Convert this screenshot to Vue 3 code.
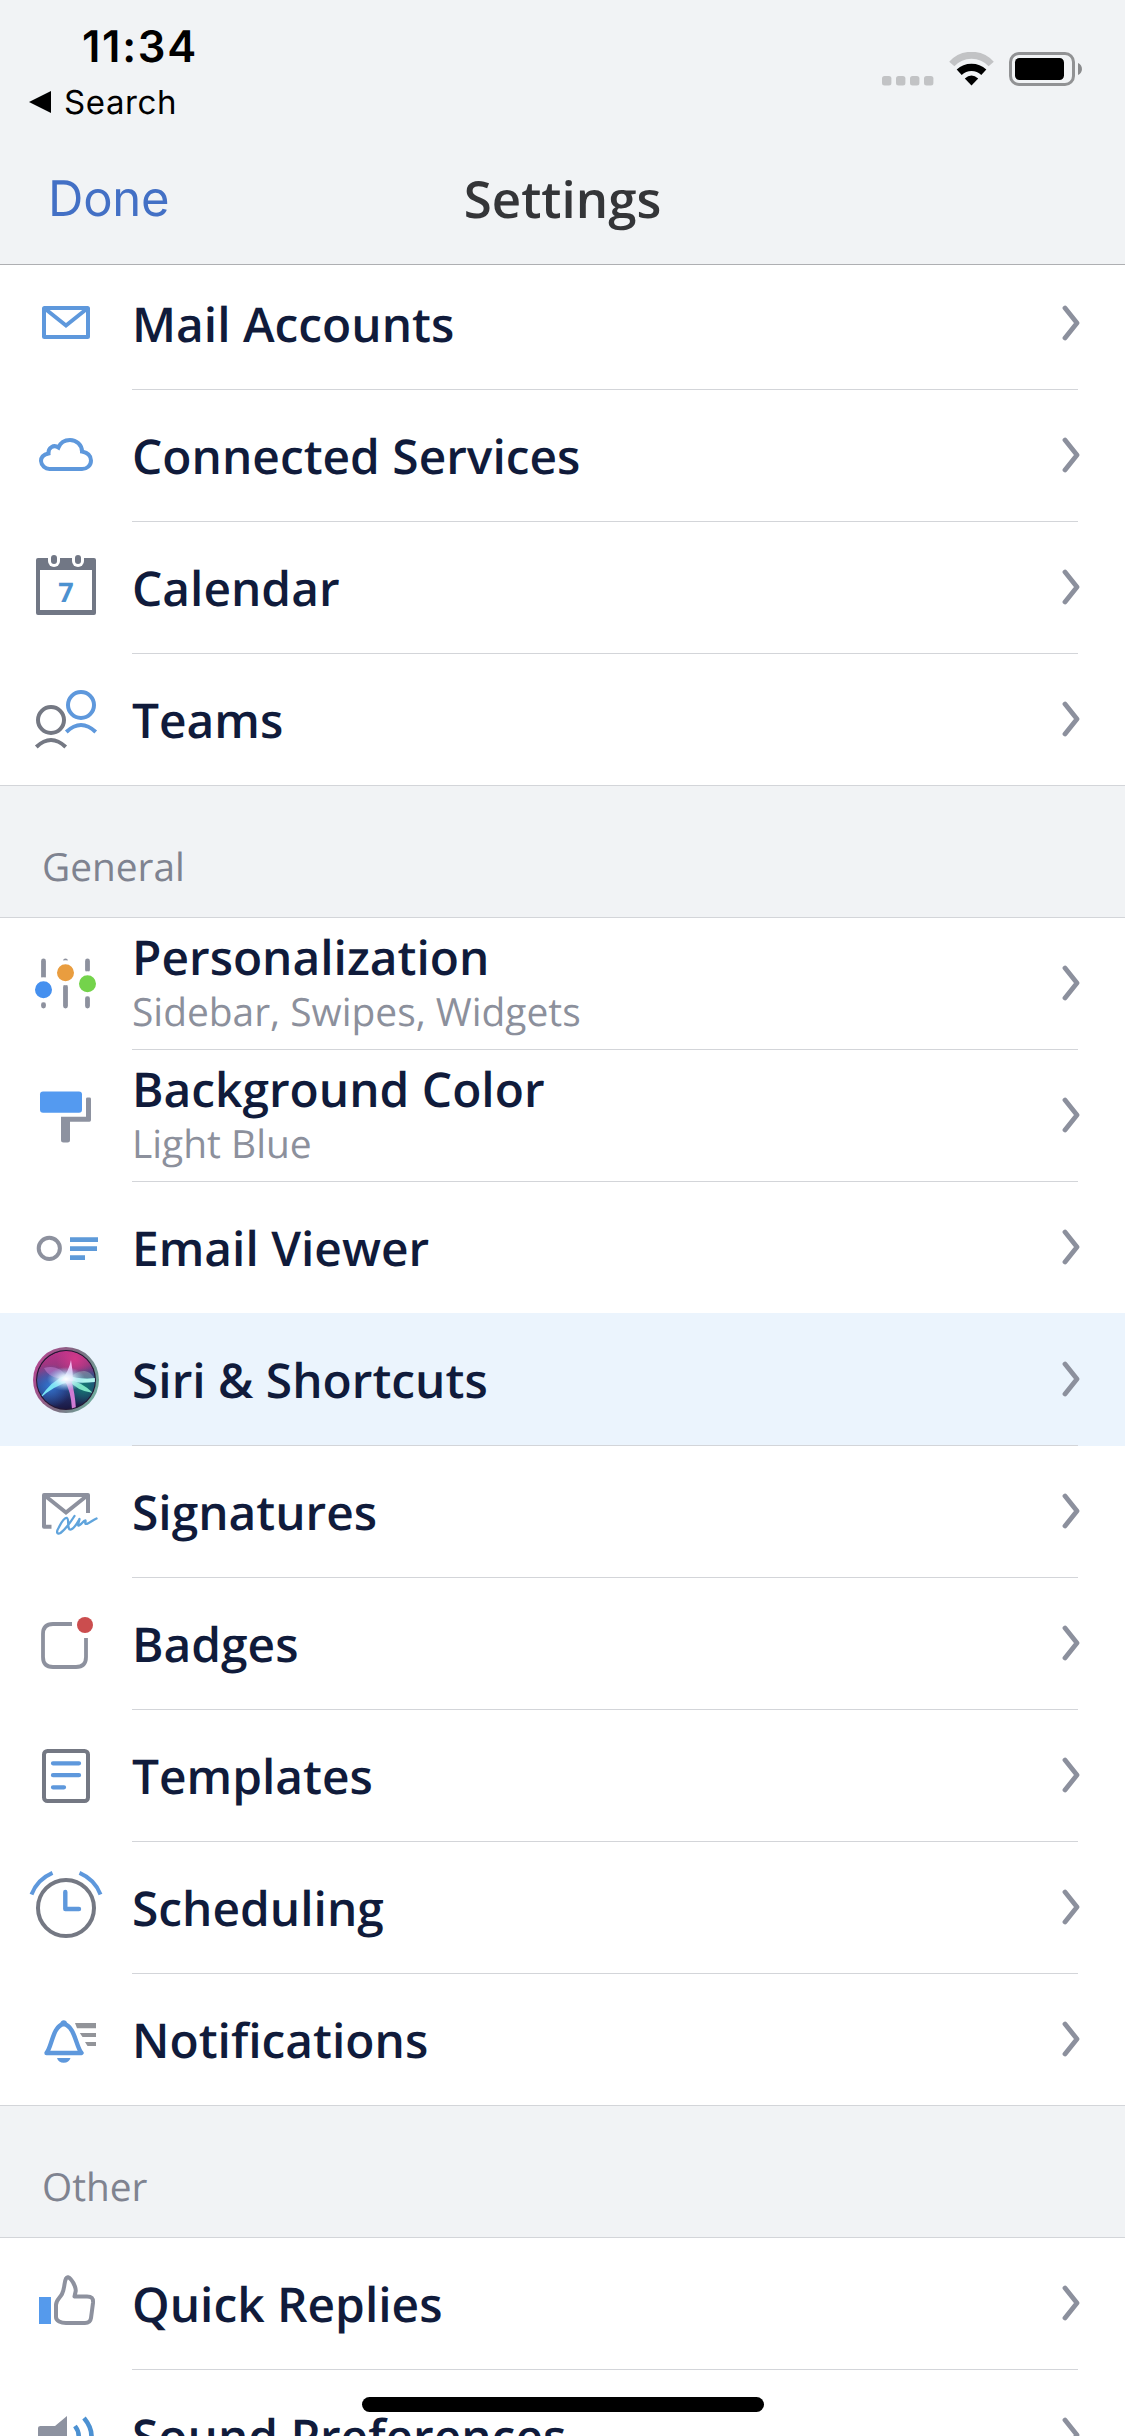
<template>
  <div class="phone">
    <header class="header">
      <div class="status">
        <div class="status__left">
          <div class="status__time">11:34</div>
          <div class="status__back">
            <svg width="22" height="22" viewBox="0 0 22 22"><path d="M0 11L22 0V22Z" fill="#000" /></svg>
            <span>Search</span>
          </div>
        </div>
        <div class="status__right">
          <svg width="52" height="34" viewBox="0 0 52 34" fill="#c2c3c5">
            <rect v-for="n in 4" :key="n" :x="(n - 1) * 14" y="24" width="9.4" height="9.4" rx="2.5" />
          </svg>
          <svg class="status__wifi" width="45" height="34" viewBox="0 0 45 34" fill="none">
            <path d="M2.8 12A26.6 26.6 0 0 1 42.2 12" stroke="#c2c3c5" stroke-width="7" />
            <path d="M10.2 20.2A18 18 0 0 1 34.8 20.2" stroke="#000" stroke-width="7.4" />
            <path d="M15.8 26.6Q22.5 20.6 29.2 26.6L22.5 33.4Z" fill="#000" />
          </svg>
          <svg class="status__battery" width="74" height="34" viewBox="0 0 74 34">
            <rect x="1.5" y="1.5" width="63" height="31" rx="8.5" fill="none" stroke="#919294" stroke-width="3" />
            <rect x="6" y="6" width="49" height="22" rx="4.5" fill="#000" />
            <path d="M69 11C74.3 13 74.3 21 69 23Z" fill="#8a8b8d" />
          </svg>
        </div>
      </div>
      <nav class="nav">
        <a class="nav__done">Done</a>
        <h1 class="nav__title">Settings</h1>
        <span></span>
      </nav>
    </header>

    <main class="content">
      <section v-for="group in groups" :key="group.name" class="group">
        <h2 v-if="group.label" class="group__label">{{ group.label }}</h2>
        <div
          v-for="item in group.items"
          :key="item.title"
          class="row"
          :class="{ 'row--active': item.active, 'row--double': item.subtitle }"
        >
          <svg class="row__icon" width="132" height="132" viewBox="0 0 132 132" fill="none" stroke-width="4">
            <g v-if="item.icon === 'mail'" class="blue" stroke-linejoin="round">
              <rect x="44" y="50" width="44" height="29" rx="0.5" />
              <path d="M46 51.5L66 67.5L86 51.5" stroke-linejoin="miter" />
            </g>
            <g v-else-if="item.icon === 'cloud'" class="blue">
              <path d="M50 79H82C87 79 91 75.5 91 70.5C91 65.5 87 62.5 82 61.5C82 55 76.5 50 70 50C65 50 60.5 52.5 58.5 57.5C53.5 54 48 58 48.5 63.5C44 64.5 41 67 41 71A8.5 8.5 0 0 0 50 79Z" />
            </g>
            <g v-else-if="item.icon === 'calendar'">
              <path d="M38 36H94Q96 36 96 38V91Q96 93 94 93H38Q36 93 36 91V38Q36 36 38 36ZM40 48V88H92V48Z" fill="#717785" fill-rule="evenodd" />
              <rect x="48" y="30" width="12" height="15" rx="6" fill="#fff" />
              <rect x="72" y="30" width="12" height="15" rx="6" fill="#fff" />
              <rect x="51" y="33" width="6" height="9" rx="3" fill="#717785" />
              <rect x="75" y="33" width="6" height="9" rx="3" fill="#717785" />
              <text class="day" x="66" y="80" text-anchor="middle">7</text>
            </g>
            <g v-else-if="item.icon === 'teams'">
              <g class="dark"><circle cx="51" cy="66" r="13" /><path d="M36.3 93Q51 79 65.7 93" /></g>
              <g class="blue"><circle cx="81" cy="51" r="13" /><path d="M66.3 78Q81 64 95.7 78" /></g>
            </g>
            <g v-else-if="item.icon === 'sliders'">
              <path class="gray" d="M43.5 43V59M43.5 86.5V88M65.5 42.8V42.9M65.5 69V88M87.5 43V52M87.5 80.5V88" stroke-width="4.8" stroke-linecap="round" />
              <g stroke="#fff">
                <circle cx="43.5" cy="71.8" r="10.5" fill="#4590ef" />
                <circle cx="65.5" cy="54.7" r="10.5" fill="#e99d3f" />
                <circle cx="87.5" cy="65.8" r="10.5" fill="#74d34b" />
              </g>
            </g>
            <g v-else-if="item.icon === 'roller'">
              <rect x="40" y="41.5" width="42" height="21.2" rx="3" fill="#549af0" />
              <path d="M86 49Q86 47.6 87.5 47.6H89.5Q91 47.6 91 49V70Q91 71.8 89.5 71.8H70V90Q70 92.5 67.5 92.5H63.5Q61 92.5 61 90V66.8H86Z" fill="#8d92a0" />
            </g>
            <g v-else-if="item.icon === 'viewer'">
              <circle class="gray" cx="49.3" cy="66.3" r="10.6" />
              <path d="M70 55.2H98V60H70ZM70 64.2H97V69H70ZM70 73.2H85V78H70Z" fill="#5e9ad9" />
            </g>
            <g v-else-if="item.icon === 'siri'">
              <defs>
                <linearGradient id="siriRim" x1="0" y1="0.3" x2="1" y2="0.7">
                  <stop offset="0" stop-color="#b54792" />
                  <stop offset="0.5" stop-color="#7d6a80" />
                  <stop offset="1" stop-color="#6fb09f" />
                </linearGradient>
                <linearGradient id="siriBase" x1="0.4" y1="0" x2="0.55" y2="1">
                  <stop offset="0" stop-color="#b93289" />
                  <stop offset="0.3" stop-color="#91387d" />
                  <stop offset="0.55" stop-color="#2d4590" />
                  <stop offset="1" stop-color="#1a1740" />
                </linearGradient>
                <radialGradient id="siriPink"><stop offset="0" stop-color="#d3388a" /><stop offset="1" stop-color="#d3388a" stop-opacity="0" /></radialGradient>
                <radialGradient id="siriBlue"><stop offset="0" stop-color="#3474cd" /><stop offset="1" stop-color="#2b69c2" stop-opacity="0" /></radialGradient>
                <radialGradient id="siriTeal"><stop offset="0" stop-color="#137a70" /><stop offset="1" stop-color="#137a70" stop-opacity="0" /></radialGradient>
                <radialGradient id="siriGlow"><stop offset="0" stop-color="#fff" /><stop offset="0.35" stop-color="#e2f5ff" stop-opacity="0.85" /><stop offset="1" stop-color="#8bd4f5" stop-opacity="0" /></radialGradient>
                <clipPath id="siriClip"><circle cx="66" cy="66" r="29" /></clipPath>
              </defs>
              <circle cx="66" cy="66" r="33" fill="url(#siriRim)" />
              <circle cx="66" cy="66" r="30" fill="#251734" />
              <g clip-path="url(#siriClip)">
                <circle cx="66" cy="66" r="29" fill="url(#siriBase)" />
                <circle cx="75" cy="45" r="19" fill="url(#siriPink)" />
                <circle cx="50" cy="72" r="22" fill="url(#siriBlue)" />
                <circle cx="84" cy="73" r="19" fill="url(#siriTeal)" />
                <path d="M44 54C54 51 63 55 67 64C57 66 48 62 44 54Z" fill="#c57ed0" fill-opacity="0.55" />
                <path d="M69 65C77 55 89 54 94 64Z" fill="#9aa5b4" fill-opacity="0.5" />
                <path d="M39 85Q52 66 66 61L71 67Q53 72 39 85Z" fill="#78e4f4" />
                <path d="M66 61Q80 66 96 64L95 68Q79 70 66 67Z" fill="#b0f4ed" />
                <path d="M67 65Q82 68 93 79Q77 77 67 65Z" fill="#7ce3c5" />
                <path d="M64 65L71 65Q75 79 76 95L72 95Q71 77 64 65Z" fill="#cf7bd3" />
                <path d="M61 67Q69 57 71 46Q73 57 73 67Z" fill="#f1b9ee" />
                <ellipse cx="66" cy="65" rx="19" ry="12" fill="url(#siriGlow)" />
              </g>
            </g>
            <g v-else-if="item.icon === 'signature'">
              <path class="gray" d="M51.5 80.8H44V49H88V67" stroke-linejoin="round" />
              <path class="gray" d="M46 50.5L66 66.5L86 50.5" />
              <path d="M74.5 70C70 77 64.5 84 60.5 87C57 89 56 86 58.5 82C61 77 64.5 71.5 67 72C69.5 73 66.5 84.5 71 83.5C75 82 77.5 76.5 79.5 73C79 76 77 80 79 79.5C82 78 83 75 85.5 74.5C86 76 84 78.5 87 77.8C90.5 76.5 93 74 96.500 72.500" stroke="#60a4dc" stroke-width="2.3" stroke-linecap="round" stroke-linejoin="round" />
            </g>
            <g v-else-if="item.icon === 'badge'">
              <path class="gray" d="M72 46H53Q43 46 43 56V79Q43 89 53 89H76Q86 89 86 79V60" stroke-width="3.8" />
              <circle cx="85" cy="47" r="8" fill="#cb4d4e" />
            </g>
            <g v-else-if="item.icon === 'template'">
              <rect class="dark" x="44" y="41" width="44" height="50" rx="3.5" />
              <path class="blue" d="M53 53.3H79M53 65.2H79M53 77.3H64" stroke-width="4.3" stroke-linecap="round" />
            </g>
            <g v-else-if="item.icon === 'clock'">
              <circle class="dark" cx="66" cy="66" r="28" />
              <path class="blue" d="M65.3 50V67H79" stroke-width="4.4" stroke-linecap="round" stroke-linejoin="round" />
              <path class="blue" d="M31.5 52.5Q37 37.5 52.5 30.8M100.5 52.5Q95 37.5 79.5 30.8" />
            </g>
            <g v-else-if="item.icon === 'bell'">
              <path class="blue" d="M46.5 79C52 73 52.5 52 63.7 50C75 52 76 73 81.5 79Z" stroke-width="4.4" stroke-linejoin="round" />
              <path d="M60.5 49A3.3 3.3 0 0 1 67 49ZM57 84H70.5Q69 88.8 63.7 88.8T57 84Z" fill="#5e98dc" />
              <path d="M75 49H96V54.2H77ZM79.8 59H96V63H82.5ZM85 68H96V72H87.5Z" fill="#929499" />
            </g>
            <g v-else-if="item.icon === 'thumb'">
              <rect x="39" y="59" width="12" height="27" fill="#559aec" />
              <path class="gray" d="M56 67C56 62 60 60 62 56C65 50 64 44 66 40.5C67 38.3 69 39 71 41.5C74 45 76.5 51 75.5 54L74.5 58.5H87C91.5 58.5 93.5 60 93 65L91 80C90.5 83.5 89 85 85 85H66C61 85 56 83 56 79Z" stroke-linejoin="round" />
            </g>
            <g v-else-if="item.icon === 'sound'">
              <path d="M40.5 56H55L67 46V86L55 76H40.5Q38 76 38 74V58Q38 56 40.5 56Z" fill="#8d92a0" />
              <path d="M75 56Q82.5 66 75 76M84 48Q99 66 84 84" stroke="#4c91d2" stroke-width="4.5" />
            </g>
          </svg>
          <div class="row__body">
            <div class="row__text">
              <div class="row__title">{{ item.title }}</div>
              <div v-if="item.subtitle" class="row__subtitle">{{ item.subtitle }}</div>
            </div>
            <svg class="row__chevron" width="20" height="36" viewBox="0 0 20 36" fill="none">
              <path d="M4 3L16 18L4 33" stroke="#8c909d" stroke-width="4.8" stroke-linecap="round" stroke-linejoin="round" />
            </svg>
          </div>
        </div>
      </section>
    </main>
    <div class="home-indicator"></div>
  </div>
</template>

<script setup>
const groups = [
  {
    name: 'accounts',
    items: [
      { title: 'Mail Accounts', icon: 'mail' },
      { title: 'Connected Services', icon: 'cloud' },
      { title: 'Calendar', icon: 'calendar' },
      { title: 'Teams', icon: 'teams' },
    ],
  },
  {
    name: 'general',
    label: 'General',
    items: [
      { title: 'Personalization', subtitle: 'Sidebar, Swipes, Widgets', icon: 'sliders' },
      { title: 'Background Color', subtitle: 'Light Blue', icon: 'roller' },
      { title: 'Email Viewer', icon: 'viewer' },
      { title: 'Siri & Shortcuts', icon: 'siri', active: true },
      { title: 'Signatures', icon: 'signature' },
      { title: 'Badges', icon: 'badge' },
      { title: 'Templates', icon: 'template' },
      { title: 'Scheduling', icon: 'clock' },
      { title: 'Notifications', icon: 'bell' },
    ],
  },
  {
    name: 'other',
    label: 'Other',
    items: [
      { title: 'Quick Replies', icon: 'thumb' },
      { title: 'Sound Preferences', icon: 'sound' },
    ],
  },
]
</script>

<style>
body {
  margin: 0;
}
</style>

<style scoped>
.phone {
  position: relative;
  display: flex;
  flex-direction: column;
  width: 1125px;
  height: 2436px;
  overflow: hidden;
  background: #fff;
  font-family: 'Open Sans', sans-serif;
  text-rendering: geometricPrecision;
}

.header {
  position: relative;
  z-index: 2;
  flex: none;
  box-sizing: border-box;
  height: 265px;
  background: #f1f3f5;
  border-bottom: 1px solid #aeafb2;
}
.status {
  display: flex;
  justify-content: space-between;
  height: 132px;
  font-family: Inter, sans-serif;
  color: #000;
}
.status__left {
  padding: 21px 0 0 29px;
}
.status__time {
  padding-left: 53px;
  font-size: 43.5px;
  line-height: 52px;
  font-weight: 600;
  letter-spacing: 1.7px;
}
.status__back {
  display: flex;
  align-items: center;
  gap: 13px;
  margin-top: 9px;
  font-size: 33px;
  line-height: 40px;
  letter-spacing: 0.6px;
}
.status__right {
  display: flex;
  align-items: flex-start;
  padding: 52px 42px 0 0;
}
.status__wifi {
  margin-left: 15px;
}
.status__battery {
  margin-left: 15px;
}
.nav {
  display: grid;
  grid-template-columns: 1fr auto 1fr;
  align-items: center;
  height: 132px;
  padding: 0 48px;
}
.nav__done {
  margin-top: 2px;
  font-family: Inter, sans-serif;
  font-size: 49px;
  line-height: 60px;
  letter-spacing: -0.2px;
  color: #4370c5;
}
.nav__title {
  margin: 0;
  font-size: 51px;
  line-height: 68px;
  font-weight: 600;
  color: #343538;
}

.content {
  margin-top: -7px;
}
.group__label {
  box-sizing: border-box;
  height: 132px;
  margin: 0;
  padding: 54px 42px 0;
  border-bottom: 1px solid #d3d5d9;
  background: #f1f3f5;
  font-size: 38.8px;
  line-height: 54px;
  font-weight: 400;
  color: #7f8390;
}
.row {
  display: flex;
  height: 132px;
}
.row--active {
  position: relative;
  background: #ebf4fd;
  box-shadow: 0 -1px 0 #ebf4fd;
}
.row__icon {
  flex: none;
}
.row__body {
  flex: 1;
  display: flex;
  align-items: center;
  justify-content: space-between;
  box-sizing: border-box;
  height: 132px;
  margin-right: 47px;
  border-bottom: 1px solid #d3d5d9;
}
.group .row:last-child {
  box-sizing: border-box;
  border-bottom: 1px solid #d3d5d9;
}
.group .row:last-child .row__body {
  height: 131px;
  border-bottom: none;
}
.row__text {
  padding-top: 2px;
}
.row--double .row__text {
  padding: 0 0 1px;
}
.row__title {
  font-size: 47.85px;
  line-height: 57px;
  font-weight: 600;
  color: #101b3b;
}
.row__subtitle {
  font-size: 38.9px;
  line-height: 52px;
  color: #8c909c;
}
.row__chevron {
  flex: none;
  margin: 0 -3px 1px 0;
}

.blue {
  stroke: #5e98dc;
}
.dark {
  stroke: #747883;
}
.gray {
  stroke: #8d919e;
}
.day {
  font: 700 27px 'Open Sans', sans-serif;
  fill: #4c91d0;
}

.home-indicator {
  position: absolute;
  z-index: 3;
  bottom: 24px;
  left: 362px;
  width: 402px;
  height: 15px;
  border-radius: 8px;
  background: #000;
}
</style>
